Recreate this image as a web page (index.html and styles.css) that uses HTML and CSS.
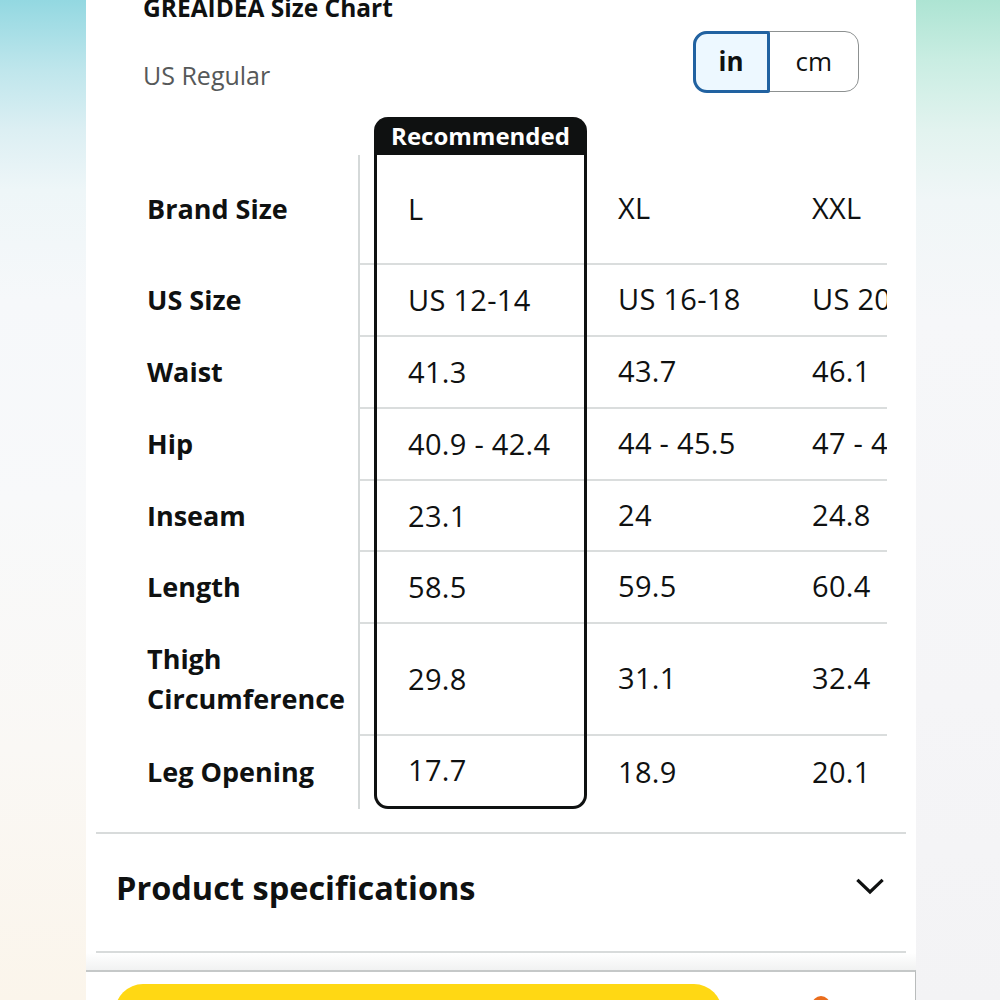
FILE: index.html
```html
<!DOCTYPE html>
<html>
<head>
<meta charset="utf-8">
<link rel="stylesheet" href="styles.css">
</head>
<body>
<div class="page">
  <div class="side side-left"></div>
  <main class="card">
    <section class="chart">
      <div class="chart-head">
        <div class="titles">
          <h2 class="title">GREAIDEA Size Chart</h2>
          <div class="subtitle">US Regular</div>
        </div>
        <div class="toggle">
          <span class="seg seg-on">in</span>
          <span class="seg seg-off">cm</span>
        </div>
      </div>
      <div class="table">
        <div class="row row-head">
          <div class="cell label"></div>
          <div class="cell gap nb"></div>
          <div class="cell rec rec-head">Recommended</div>
          <div class="cell data nb"></div>
          <div class="cell data nb"></div>
        </div>
        <div class="row r1">
          <div class="cell label line">Brand Size</div>
          <div class="cell gap"></div>
          <div class="cell rec">L</div>
          <div class="cell data">XL</div>
          <div class="cell data">XXL</div>
        </div>
        <div class="row r2">
          <div class="cell label line">US Size</div>
          <div class="cell gap"></div>
          <div class="cell rec">US 12-14</div>
          <div class="cell data">US 16-18</div>
          <div class="cell data">US 20-22</div>
        </div>
        <div class="row r2">
          <div class="cell label line">Waist</div>
          <div class="cell gap"></div>
          <div class="cell rec">41.3</div>
          <div class="cell data">43.7</div>
          <div class="cell data">46.1</div>
        </div>
        <div class="row r2">
          <div class="cell label line">Hip</div>
          <div class="cell gap"></div>
          <div class="cell rec">40.9 - 42.4</div>
          <div class="cell data">44 - 45.5</div>
          <div class="cell data">47 - 48.5</div>
        </div>
        <div class="row r5">
          <div class="cell label line">Inseam</div>
          <div class="cell gap"></div>
          <div class="cell rec">23.1</div>
          <div class="cell data">24</div>
          <div class="cell data">24.8</div>
        </div>
        <div class="row r2">
          <div class="cell label line">Length</div>
          <div class="cell gap"></div>
          <div class="cell rec">58.5</div>
          <div class="cell data">59.5</div>
          <div class="cell data">60.4</div>
        </div>
        <div class="row r7">
          <div class="cell label line two">Thigh<br>Circumference</div>
          <div class="cell gap"></div>
          <div class="cell rec">29.8</div>
          <div class="cell data">31.1</div>
          <div class="cell data">32.4</div>
        </div>
        <div class="row r8">
          <div class="cell label line">Leg Opening</div>
          <div class="cell gap nb"></div>
          <div class="cell rec rec-foot">17.7</div>
          <div class="cell data nb">18.9</div>
          <div class="cell data nb">20.1</div>
        </div>
      </div>
    </section>
    <section class="specs">
      <span class="specs-title">Product specifications</span>
      <svg class="chev" width="28" height="18" viewBox="0 0 28 18"><path d="M2.5 3 L14 14 L25.5 3" fill="none" stroke="#0f1111" stroke-width="3.2" stroke-linecap="square"/></svg>
    </section>
    <div class="shade"></div>
    <div class="buybar">
      <div class="buy-btn"></div>
      <div class="dot"></div>
    </div>
  </main>
  <div class="side side-right"></div>
</div>
</body>
</html>
```
FILE: styles.css
```css
html, body {
  margin: 0;
  padding: 0;
}
body {
  font-family: "Open Sans", "Noto Sans", "Liberation Sans", sans-serif;
  color: #0f1111;
  width: 1000px;
  height: 1000px;
  overflow: hidden;
}
.page {
  display: flex;
  height: 1000px;
}
.side {
  flex: none;
  height: 1000px;
}
.side-left {
  width: 86px;
  background: linear-gradient(180deg, #93d8e1 0px, #bfe6ec 70px, #dceff3 130px, #eef6f8 190px, #f6f8fa 300px, #f8f9fa 500px, #faf8f5 750px, #fbf5eb 1000px);
}
.side-right {
  width: 84px;
  background: linear-gradient(180deg, #ade4d3 0px, #c9ede2 60px, #e2f3ef 130px, #f0f6f7 200px, #f6f7f9 320px, #f5f5f7 700px, #f3f3f5 1000px);
}
.card {
  width: 830px;
  flex: none;
  background: #fff;
  display: flex;
  flex-direction: column;
  height: 1000px;
  overflow: hidden;
}
.chart {
  flex: none;
  padding: 0 29px 0 57px;
}
.chart-head {
  display: flex;
  justify-content: space-between;
  align-items: flex-start;
}
.title {
  margin: -6px 0 0 0;
  font-size: 24.5px;
  line-height: 28px;
  font-weight: 700;
}
.subtitle {
  margin-top: 38px;
  font-size: 25px;
  line-height: 30px;
  color: #565959;
}
.toggle {
  margin: 31px 28px 0 0;
  display: flex;
  width: 166px;
  height: 61px;
  box-sizing: border-box;
  border: 1.5px solid #8d9191;
  border-radius: 14px;
}
.seg {
  display: flex;
  align-items: center;
  justify-content: center;
  font-size: 26px;
  padding-bottom: 2px;
  box-sizing: border-box;
}
.seg-on {
  width: 77px;
  flex: none;
  margin: -1.5px 0 -1.5px -1.5px;
  border: 3px solid #2162a1;
  border-radius: 14px 2px 2px 14px;
  background: #edf8ff;
  font-weight: 700;
}
.seg-off {
  flex: 1;
}
.table {
  margin-top: 25px;
  width: 744px;
  overflow: hidden;
}
.row {
  display: flex;
}
.cell {
  flex: none;
  box-sizing: border-box;
  display: flex;
  align-items: center;
  font-size: 29px;
  letter-spacing: 0.3px;
  white-space: nowrap;
  padding-bottom: 3px;
  border-bottom: 2px solid #dadddd;
}
.cell.nb {
  border-bottom: none;
}
.label {
  width: 217px;
  padding-left: 4px;
  font-size: 27px;
  letter-spacing: 0;
  font-weight: 700;
  border-bottom: none;
  white-space: normal;
}
.label.line {
  border-right: 2px solid #d5d9d9;
}
.label.two {
  line-height: 40px;
}
.gap {
  width: 14px;
}
.rec {
  width: 213px;
  padding-left: 31px;
  border-left: 3px solid #0f1111;
  border-right: 3px solid #0f1111;
  border-bottom: none;
  background: linear-gradient(#dadddd, #dadddd) left bottom / 100% 2px no-repeat;
}
.data {
  width: 194px;
  padding-left: 31px;
}
.row-head {
  height: 38px;
}
.rec-head {
  background: #0f1111;
  color: #fff;
  font-weight: 700;
  font-size: 24px;
  letter-spacing: 0;
  justify-content: center;
  padding: 0 0 2px 0;
  border-radius: 14px 14px 0 0;
}
.r1 { height: 110px; }
.r2 { height: 72px; }
.r5 { height: 71px; }
.r7 { height: 112px; }
.r8 { height: 73px; }
.rec-foot {
  border-bottom: 3px solid #0f1111;
  border-radius: 0 0 14px 14px;
  background: none;
}
.specs {
  flex: none;
  margin: 23px 10px 0 10px;
  height: 121px;
  box-sizing: border-box;
  border-top: 2px solid #d8dbdb;
  border-bottom: 2px solid #d8dbdb;
  display: flex;
  align-items: center;
  justify-content: space-between;
  padding: 0 22px 11px 20px;
}
.specs-title {
  font-size: 32.5px;
  font-weight: 700;
}
.chev {
  display: block;
}
.shade {
  height: 17px;
  background: linear-gradient(180deg, #ffffff, #f1f2f2);
  flex: none;
}
.buybar {
  flex: 1;
  display: flex;
  align-items: flex-start;
  border-top: 2px solid #c5c8c8;
  border-right: 1.5px solid #b9bcbc;
  padding: 12px 0 0 29px;
  background: #fff;
}
.buy-btn {
  width: 607px;
  height: 56px;
  border-radius: 28px;
  background: #ffd814;
  flex: none;
}
.dot {
  width: 18px;
  height: 18px;
  border-radius: 50%;
  background: #ea6d1d;
  margin: 12px 0 0 90px;
  flex: none;
}
```
